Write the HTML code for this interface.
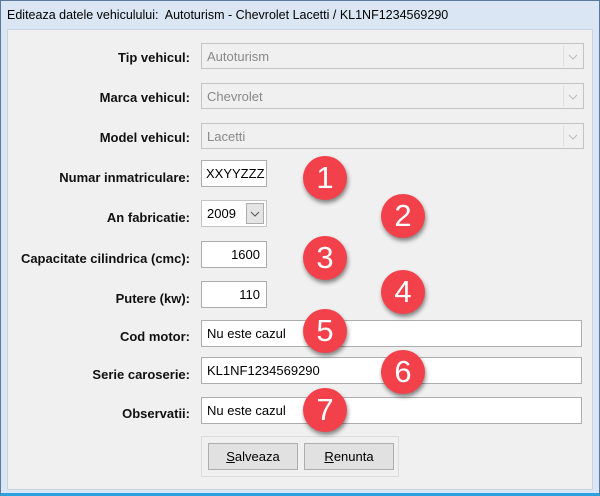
<!DOCTYPE html>
<html><head><style>
*{margin:0;padding:0;box-sizing:border-box}
body{width:600px;height:496px;background:#fff;position:relative;overflow:hidden;font-family:"Liberation Sans",sans-serif}
.frame{position:absolute;left:0;top:0;width:600px;height:496px;background:#dae6f3;border:1px solid #5a7a9a;border-bottom:3px solid #2aa0dc}
.title{position:absolute;left:7px;top:8px;font-size:12.5px;color:#000}
.content{position:absolute;left:7px;top:29px;width:586px;height:461px;background:#f0f0f0;border:1px solid #c8d4e0}
.lbl{position:absolute;right:410px;font-size:13px;font-weight:bold;color:#111;text-align:right;white-space:nowrap}
.f{position:absolute;background:#fff;border:1px solid #adadad;font-size:12.5px;padding-left:5px;color:#000}
.cb{position:absolute;left:201px;width:383px;height:26px;background:#f0f0f0;border:1px solid #c4c4c4;color:#888;font-size:13px;padding:5px 5px}
.cb .a{position:absolute;right:2px;top:2px;width:18px;height:20px;border-left:1px solid #ddd}
.c{position:absolute;width:44px;height:44px;border-radius:50%;background:#f2414a;color:#fff;font-size:31px;text-align:center;line-height:44px;box-shadow:1px 3px 4px rgba(0,0,0,.45)}
.btn{position:absolute;top:443px;width:90px;height:27px;background:#e1e1e1;border:1px solid #adadad;font-size:13px;text-align:center;line-height:25px}
</style></head><body>
<div class="frame"></div>
<div class="title">Editeaza datele vehiculului:&nbsp; Autoturism - Chevrolet Lacetti / KL1NF1234569290</div>
<div class="content"></div>

<div class="lbl" style="top:50px">Tip vehicul:</div>
<div class="cb" style="top:43px">Autoturism<div class="a"><svg width="18" height="20"><path d="M5 9l4 4 4-4" fill="none" stroke="#bbb"/></svg></div></div>
<div class="lbl" style="top:90px">Marca vehicul:</div>
<div class="cb" style="top:83px">Chevrolet<div class="a"><svg width="18" height="20"><path d="M5 9l4 4 4-4" fill="none" stroke="#bbb"/></svg></div></div>
<div class="lbl" style="top:130px">Model vehicul:</div>
<div class="cb" style="top:123px">Lacetti<div class="a"><svg width="18" height="20"><path d="M5 9l4 4 4-4" fill="none" stroke="#bbb"/></svg></div></div>

<div class="lbl" style="top:170px">Numar inmatriculare:</div>
<div class="f" style="left:201px;top:160px;width:66px;height:27px;line-height:26px;padding-left:4px;font-size:13px">XXYYZZZ</div>
<div class="lbl" style="top:210px">An fabricatie:</div>
<div class="f" style="left:201px;top:200px;width:66px;height:27px;line-height:26px;border-color:#c4c4c4;font-size:13px">2009<div style="position:absolute;right:2px;top:2px;width:18px;height:21px;background:#e4e4e4;border:1px solid #adadad"><svg width="16" height="19"><path d="M4 8l4 4 4-4" fill="none" stroke="#555"/></svg></div></div>
<div class="lbl" style="top:251px">Capacitate cilindrica (cmc):</div>
<div class="f" style="left:201px;top:241px;width:66px;height:27px;line-height:26px;text-align:right;padding-right:6px;font-size:13px">1600</div>
<div class="lbl" style="top:291px">Putere (kw):</div>
<div class="f" style="left:201px;top:281px;width:66px;height:27px;line-height:26px;text-align:right;padding-right:6px;font-size:13px">110</div>

<div class="lbl" style="top:329px">Cod motor:</div>
<div class="f" style="left:201px;top:320px;width:381px;height:27px;line-height:26px;font-size:13px">Nu este cazul</div>
<div class="lbl" style="top:367px">Serie caroserie:</div>
<div class="f" style="left:201px;top:357px;width:381px;height:27px;line-height:26px;font-size:13px">KL1NF1234569290</div>
<div class="lbl" style="top:406px">Observatii:</div>
<div class="f" style="left:201px;top:397px;width:381px;height:27px;line-height:26px;font-size:13px">Nu este cazul</div>

<div style="position:absolute;left:201px;top:436px;width:198px;height:41px;border:1px solid #dcdcdc"></div>
<div class="btn" style="left:208px"><u>S</u>alveaza</div>
<div class="btn" style="left:304px"><u>R</u>enunta</div>

<div class="c" style="left:303px;top:156px">1</div>
<div class="c" style="left:381px;top:194px">2</div>
<div class="c" style="left:303px;top:236px">3</div>
<div class="c" style="left:381px;top:270px">4</div>
<div class="c" style="left:303px;top:309px">5</div>
<div class="c" style="left:381px;top:350px">6</div>
<div class="c" style="left:303px;top:388px">7</div>
</body></html>
